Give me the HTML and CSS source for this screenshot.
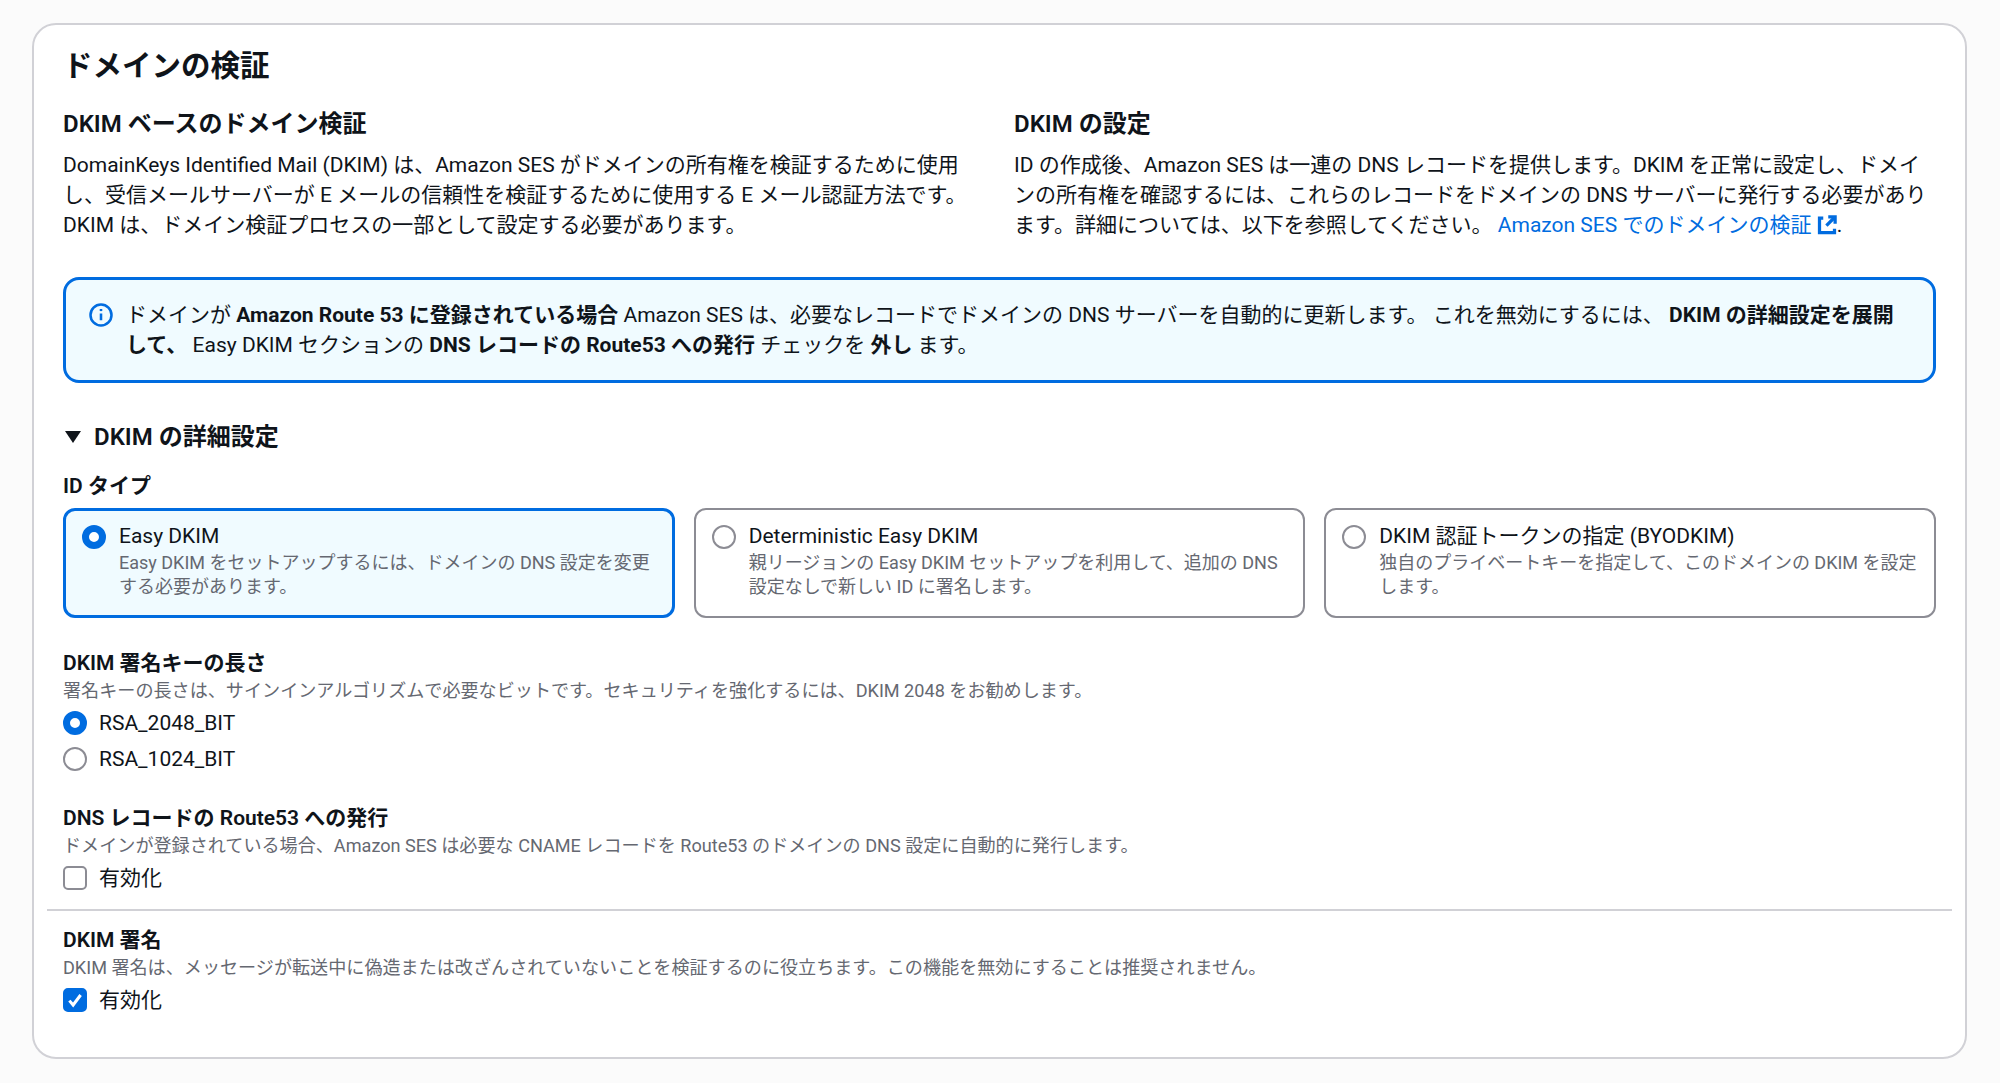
FILE: index.html
```html
<!DOCTYPE html>
<html lang="ja">
<head>
    <meta charset="UTF-8">
    <meta name="viewport" content="width=device-width, initial-scale=1.0">
    <title>ドメインの検証</title>
    <link rel="stylesheet" href="styles.css">
</head>
<body>
    <div class="panel">
        <h1>ドメインの検証</h1>

        <div class="intro">
            <div>
                <h2>DKIM ベースのドメイン検証</h2>
                <p>DomainKeys Identified Mail (DKIM) は、Amazon SES がドメインの所有権を検証するために使用<br>し、受信メールサーバーが E メールの信頼性を検証するために使用する E メール認証方法です。<br>DKIM は、ドメイン検証プロセスの一部として設定する必要があります。</p>
            </div>
            <div>
                <h2>DKIM の設定</h2>
                <p>ID の作成後、Amazon SES は一連の DNS レコードを提供します。DKIM を正常に設定し、ドメイ<br>ンの所有権を確認するには、これらのレコードをドメインの DNS サーバーに発行する必要があり<br>ます。詳細については、以下を参照してください。 <a href="#">Amazon SES でのドメインの検証
                    <svg class="ext-icon" viewBox="0 0 16 16"><path d="M14.5 7V1.5H9"/><path d="M14 2L7.5 8.5"/><path d="M5 2.5H2V14h12v-3"/></svg></a>.</p>
            </div>
        </div>

        <div class="info-box">
            <svg class="info-icon" viewBox="0 0 16 16"><circle cx="8" cy="8" r="7"/><path d="M8 7v4.5"/><path d="M8 4v1.4"/></svg>
            <p>ドメインが <b>Amazon Route 53 に登録されている場合</b> Amazon SES は、必要なレコードでドメインの DNS サーバーを自動的に更新します。 これを無効にするには、 <b>DKIM の詳細設定を展開<br>して、</b> Easy DKIM セクションの <b>DNS レコードの Route53 への発行</b> チェックを <b>外し</b> ます。</p>
        </div>

        <div class="section-head"><span class="caret"></span>DKIM の詳細設定</div>

        <div class="field-title id-title">ID タイプ</div>
        <div class="cards">
            <div class="card selected">
                <span class="radio on"></span>
                <div>
                    <div class="card-label">Easy DKIM</div>
                    <div class="card-desc">Easy DKIM をセットアップするには、ドメインの DNS 設定を変更<br>する必要があります。</div>
                </div>
            </div>
            <div class="card">
                <span class="radio"></span>
                <div>
                    <div class="card-label">Deterministic Easy DKIM</div>
                    <div class="card-desc">親リージョンの Easy DKIM セットアップを利用して、追加の DNS<br>設定なしで新しい ID に署名します。</div>
                </div>
            </div>
            <div class="card">
                <span class="radio"></span>
                <div>
                    <div class="card-label">DKIM 認証トークンの指定 (BYODKIM)</div>
                    <div class="card-desc">独自のプライベートキーを指定して、このドメインの DKIM を設定<br>します。</div>
                </div>
            </div>
        </div>

        <div class="field-title key-title">DKIM 署名キーの長さ</div>
        <div class="field-desc">署名キーの長さは、サインインアルゴリズムで必要なビットです。セキュリティを強化するには、DKIM 2048 をお勧めします。</div>
        <div class="options">
            <div class="option"><span class="radio on"></span>RSA_2048_BIT</div>
            <div class="option"><span class="radio"></span>RSA_1024_BIT</div>
        </div>

        <div class="field-title dns-title">DNS レコードの Route53 への発行</div>
        <div class="field-desc">ドメインが登録されている場合、Amazon SES は必要な CNAME レコードを Route53 のドメインの DNS 設定に自動的に発行します。</div>
        <div class="options">
            <div class="option"><span class="checkbox"></span>有効化</div>
        </div>

        <hr class="divider">

        <div class="field-title">DKIM 署名</div>
        <div class="field-desc">DKIM 署名は、メッセージが転送中に偽造または改ざんされていないことを検証するのに役立ちます。この機能を無効にすることは推奨されません。</div>
        <div class="options">
            <div class="option">
                <span class="checkbox on"><svg viewBox="0 0 16 16"><path d="M3.5 8.5l3 3.5 6-8"/></svg></span>有効化
            </div>
        </div>
    </div>
</body>
</html>
```

FILE: styles.css
```css
body {
    margin: 0;
    background-color: #fbfbfb;
    color: #0f141a;
    font-family: Roboto, "Noto Sans CJK JP", sans-serif;
    font-size: 21px;
    line-height: 30px;
}

.panel {
    margin: 23px 33px 0 32px;
    padding: 23px 29px 39px 29px;
    background: #ffffff;
    border: 2px solid #d1d1d6;
    border-radius: 24px;
}

h1 {
    margin: 0 0 24px 0;
    font-size: 29.5px;
    line-height: 37px;
    font-weight: 600;
}

h2 {
    margin: 0 0 11px 0;
    font-size: 24px;
    line-height: 30px;
    font-weight: 600;
}

p {
    margin: 0;
}

.intro {
    display: grid;
    grid-template-columns: 921px 1fr;
    gap: 30px;
}

a {
    color: #006ce0;
    text-decoration: none;
}

.ext-icon {
    width: 20px;
    height: 20px;
    vertical-align: -3px;
    fill: none;
    stroke: #006ce0;
    stroke-width: 2.6;
}

.info-box {
    display: flex;
    gap: 13px;
    margin-top: 37px;
    padding: 20px 20px 20px 23px;
    background: #f0fbff;
    border: 3px solid #006ce0;
    border-radius: 16px;
}

.info-icon {
    flex: none;
    width: 24px;
    height: 24px;
    margin-top: 3px;
    fill: none;
    stroke: #006ce0;
    stroke-width: 1.7;
}

.section-head {
    display: flex;
    align-items: center;
    margin-top: 39px;
    font-size: 24px;
    font-weight: 600;
}

.caret {
    width: 0;
    height: 0;
    margin: 0 13px 0 2px;
    border-left: 8px solid transparent;
    border-right: 8px solid transparent;
    border-top: 12px solid #0f141a;
}

.field-title {
    margin-top: 15px;
    font-size: 21px;
    line-height: 28px;
    font-weight: 600;
}

.id-title {
    margin-top: 20px;
}

.key-title {
    margin-top: 31px;
}

.dns-title {
    margin-top: 27px;
}

.cards {
    display: grid;
    grid-template-columns: repeat(3, 1fr);
    gap: 19px;
    margin-top: 8px;
}

.card {
    display: flex;
    gap: 13px;
    height: 110px;
    box-sizing: border-box;
    padding: 13px 16px 16px 16px;
    border: 2px solid #8c8c94;
    border-radius: 12px;
}

.card.selected {
    padding: 12px 15px 15px 16px;
    background: #f0fbff;
    border: 3px solid #006ce0;
}

.card .radio {
    margin-top: 2px;
}

.card-label {
    line-height: 26px;
}

.card-desc {
    margin-top: 2px;
    font-size: 18px;
    line-height: 24px;
    color: #656871;
}

.field-desc {
    margin-top: 2px;
    font-size: 18.1px;
    line-height: 24px;
    color: #656871;
}

.options {
    margin-top: 2px;
}

.option {
    display: flex;
    align-items: center;
    gap: 12px;
    height: 36px;
}

.radio {
    flex: none;
    width: 24px;
    height: 24px;
    box-sizing: border-box;
    background: #ffffff;
    border: 2px solid #8c8c94;
    border-radius: 50%;
}

.radio.on {
    border: 7px solid #006ce0;
}

.checkbox {
    flex: none;
    width: 24px;
    height: 24px;
    box-sizing: border-box;
    background: #ffffff;
    border: 2px solid #8c8c94;
    border-radius: 5px;
}

.checkbox.on {
    background: #006ce0;
    border-color: #006ce0;
}

.checkbox svg {
    display: block;
    fill: none;
    stroke: #ffffff;
    stroke-width: 2.4;
}

.divider {
    margin: 13px -16px 0 -16px;
    border: none;
    border-top: 2px solid #d1d1d6;
}
```
